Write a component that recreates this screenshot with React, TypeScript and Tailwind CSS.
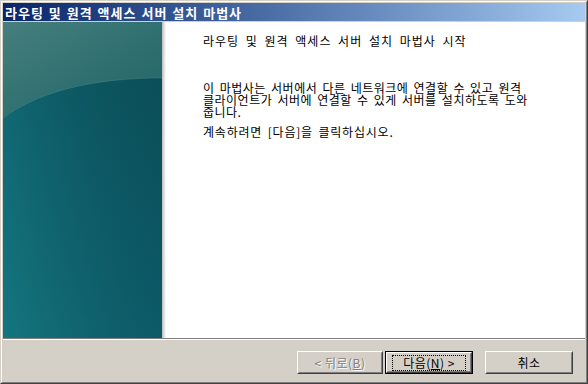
import React from "react";

const FONT = { fontFamily: '"Noto Sans CJK KR", "Noto Sans", sans-serif' };

function Bevel({ children, className = "" }: { children: React.ReactNode; className?: string }) {
  return (
    <div className={"h-full w-full border border-t-white border-l-white border-r-[#404040] border-b-[#404040] " + className}>
      <div className="h-full w-full border border-t-[#d4d0c8] border-l-[#d4d0c8] border-r-[#808080] border-b-[#808080] flex items-center justify-center">
        {children}
      </div>
    </div>
  );
}

function PanelArt() {
  return (
    <svg width="159" height="316" viewBox="0 0 159 316" className="block">
      <defs>
        <linearGradient id="base" x1="1" y1="0" x2="0" y2="1">
          <stop offset="0" stopColor="#0a5258" />
          <stop offset="0.45" stopColor="#0e616c" />
          <stop offset="1" stopColor="#147680" />
        </linearGradient>
        <linearGradient id="top" x1="0" y1="0" x2="1" y2="1">
          <stop offset="0" stopColor="#457f7d" />
          <stop offset="0.6" stopColor="#2e6e6f" />
          <stop offset="1" stopColor="#226468" />
        </linearGradient>
        <linearGradient id="fadeR" x1="0" y1="0" x2="1" y2="0">
          <stop offset="0" stopColor="#000" stopOpacity="0" />
          <stop offset="1" stopColor="#062f4a" stopOpacity="0.18" />
        </linearGradient>
      </defs>
      <rect width="159" height="316" fill="url(#base)" />
      <rect width="159" height="316" fill="url(#fadeR)" />
      <path d="M0,0 H159 V56 C100,56 40,66 0,96 Z" fill="url(#top)" />
      <path d="M159,56 C100,56 40,66 0,96" fill="none" stroke="#5a9290" strokeOpacity="0.35" strokeWidth="1" />
    </svg>
  );
}

export default function App() {
  return (
    <div style={FONT} className="w-[588px] h-[384px] bg-[#d4d0c8] border border-t-[#d4d0c8] border-l-[#d4d0c8] border-r-[#404040] border-b-[#404040]">
      <div className="h-full w-full border border-t-white border-l-white border-r-[#808080] border-b-[#808080] p-px flex flex-col">
        {/* title bar */}
        <div className="h-[18px] shrink-0 bg-linear-to-r from-[#0a246a] to-[#a6caf0] flex items-center pl-[2px]">
          <span className="text-white font-bold text-[13px] leading-none tracking-[1px] [word-spacing:1px] whitespace-nowrap">
            라우팅 및 원격 액세스 서버 설치 마법사
          </span>
        </div>
        {/* body */}
        <div className="mt-px h-[316px] shrink-0 flex bg-white">
          <PanelArt />
          <div className="w-[4px] bg-linear-to-r from-[#bcbcbc] to-white" />
          <div className="flex-1 pl-[37px] pt-[13px] text-black text-[12px] whitespace-nowrap">
            <div className="leading-[12px] tracking-[1px] [word-spacing:3px]">라우팅 및 원격 액세스 서버 설치 마법사 시작</div>
            <div className="mt-[35px] leading-[12px] tracking-[0.5px] [word-spacing:2px]">
              이 마법사는 서버에서 다른 네트워크에 연결할 수 있고 원격
              <br />
              클라이언트가 서버에 연결할 수 있게 서버를 설치하도록 도와
              <br />
              줍니다.
            </div>
            <div className="mt-[8px] leading-[12px] tracking-[0.8px] [word-spacing:2px]">계속하려면 [다음]을 클릭하십시오.</div>
          </div>
        </div>
        {/* separator */}
        <div className="h-[2px] shrink-0 border-t border-t-[#808080] border-b border-b-white" />
        {/* buttons */}
        <div className="flex-1 flex items-start pt-[11px] pl-[294px] text-[12px] tracking-[0.5px]">
          <div className="w-[86px] h-[23px]">
            <Bevel>
              <span className="text-[#808080] [text-shadow:1px_1px_0_#ffffff] leading-none whitespace-nowrap">
                &lt; 뒤로(<span className="underline">B</span>)
              </span>
            </Bevel>
          </div>
          <div className="ml-[2px] w-[88px] h-[23px] border border-black">
            <Bevel>
              <span className="border border-dotted border-black px-[10px] py-[1px] leading-none whitespace-nowrap text-black">
                다음(<span className="underline">N</span>) &gt;
              </span>
            </Bevel>
          </div>
          <div className="ml-[12px] w-[88px] h-[23px]">
            <Bevel>
              <span className="text-black leading-none">취소</span>
            </Bevel>
          </div>
        </div>
      </div>
    </div>
  );
}
